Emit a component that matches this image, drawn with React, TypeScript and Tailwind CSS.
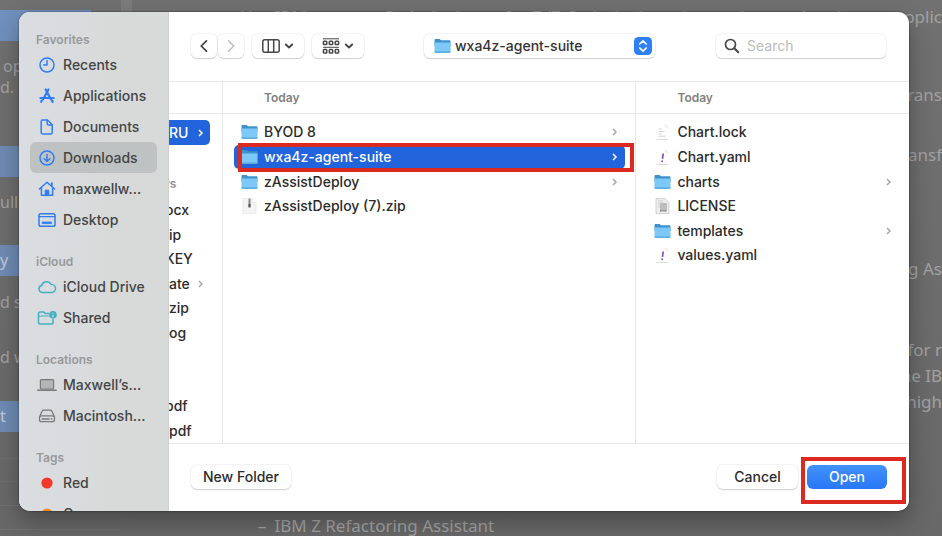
import type { ReactNode } from "react";

function Icon({ children, className = "text-[#2f7cf6]" }: { children: ReactNode; className?: string }) {
  return (
    <svg
      viewBox="0 0 20 18"
      className={"h-[18px] w-5 shrink-0 " + className}
      fill="none"
      stroke="currentColor"
      strokeWidth="1.5"
      strokeLinecap="round"
      strokeLinejoin="round"
      aria-hidden="true"
    >
      {children}
    </svg>
  );
}

const clock = (
  <Icon>
    <circle cx="10" cy="9" r="7" />
    <path d="M10 4.6V9H6.6" />
  </Icon>
);
const appStore = (
  <Icon>
    <path d="M11.400 2.400 6.200 12.200" strokeWidth="2.200" />
    <path d="M8.600 2.400 13.800 12.200" strokeWidth="2.200" />
    <path d="M3.400 11h13.200" strokeWidth="2.200" />
    <path d="M4.800 13.600 4.200 14.800M14.800 13.400l.9 1.500" strokeWidth="2.200" />
  </Icon>
);
const page = (
  <Icon>
    <path d="M5.6 2h4.8l4.8 4.8V14.600a1.400 1.400 0 0 1-1.400 1.400H5.600a1.400 1.400 0 0 1-1.400-1.400V3.400A1.400 1.400 0 0 1 5.600 2Z" />
    <path d="M10.200 2.200v3.600a1.200 1.200 0 0 0 1.200 1.200h3.600" />
  </Icon>
);
const download = (
  <Icon>
    <circle cx="10" cy="9" r="7" />
    <path d="M10 5.400v7M7.200 9.800 10 12.500l2.800-2.700" />
  </Icon>
);
const house = (
  <Icon>
    <path d="M2.400 9 10 2.200 17.600 9" />
    <path d="M14.800 6V3.200" strokeWidth="1.800" />
    <path d="M4.400 8v7.200h11.200V8" />
    <path d="M8.200 15.200v-5h3.600v5Z" fill="currentColor" strokeWidth="1" />
  </Icon>
);
const desktop = (
  <Icon>
    <rect x="2" y="2.700" width="16" height="12.600" rx="1.800" />
    <path d="M2 5.700h16" strokeWidth="1.200" />
    <rect x="5.500" y="11" width="9" height="1.600" fill="currentColor" strokeWidth="0.800" />
  </Icon>
);
const cloud = (
  <Icon className="text-[#45aec2]">
    <path d="M5.200 14.500a3.500 3.500 0 0 1-.500-6.900A5 5 0 0 1 14 6.400a4.100 4.100 0 0 1 1.200 8.100Z" />
  </Icon>
);
const shared = (
  <Icon className="text-[#45aec2]">
    <path d="M11.800 4.600H8.200L6.800 3H3a1.500 1.500 0 0 0-1.500 1.500v9A1.500 1.500 0 0 0 3 15h11.500a1.500 1.500 0 0 0 1.500-1.500V10" />
    <path d="M1.600 7h10.200" strokeWidth="1.200" />
    <circle cx="16" cy="5.800" r="3.800" fill="currentColor" stroke="none" />
    <path d="M16 4v.2M16 6v1.800" stroke="#d8dbdb" strokeWidth="1.200" />
  </Icon>
);
const laptop = (
  <Icon className="text-[#77797a]">
    <rect x="3.400" y="3.600" width="13.200" height="9.400" rx="1" fill="#b4b6b6" strokeWidth="1.200" />
    <path d="M.8 14.200h18.400" strokeWidth="1.600" />
  </Icon>
);
const drive = (
  <Icon className="text-[#77797a]">
    <path
      d="M6.800 3.200h6.400c.8 0 1.400.4 1.700 1.100l2.300 5c.2.400.3.800.3 1.200v2a2.200 2.200 0 0 1-2.200 2.200H4.700a2.200 2.200 0 0 1-2.200-2.200v-2c0-.4.1-.8.300-1.200l2.300-5c.3-.7.9-1.100 1.700-1.100Z"
      strokeWidth="1.300"
    />
    <path d="M2.900 9.600c.5-.5 1.100-.7 1.800-.7h10.600c.7 0 1.300.2 1.800.7M5 12h7.200M14.400 12h.6" strokeWidth="1.300" />
  </Icon>
);
const redDot = (
  <Icon className="text-[#f2382b]">
    <circle cx="10" cy="9" r="5.600" fill="currentColor" stroke="none" />
  </Icon>
);
const orangeDot = (
  <Icon className="text-[#ee8a20]">
    <circle cx="10" cy="9" r="5.600" fill="currentColor" stroke="none" />
  </Icon>
);

const sections = [
  {
    title: "Favorites",
    items: [
      { name: "Recents", icon: clock },
      { name: "Applications", icon: appStore },
      { name: "Documents", icon: page },
      { name: "Downloads", icon: download, selected: true },
      { name: "maxwellw...", icon: house },
      { name: "Desktop", icon: desktop },
    ],
  },
  {
    title: "iCloud",
    items: [
      { name: "iCloud Drive", icon: cloud },
      { name: "Shared", icon: shared },
    ],
  },
  {
    title: "Locations",
    items: [
      { name: "Maxwell’s...", icon: laptop },
      { name: "Macintosh...", icon: drive },
    ],
  },
  {
    title: "Tags",
    items: [
      { name: "Red", icon: redDot },
      { name: "Orange", icon: orangeDot },
    ],
  },
] as { title: string; items: { name: string; icon: ReactNode; selected?: boolean }[] }[];

function Sidebar() {
  return (
    <nav className="flex w-[150px] shrink-0 flex-col gap-[18px] overflow-hidden border-r border-[#cfd0d0] bg-linear-to-r from-[#dadde1] to-[#d8dada] to-60% px-[11px] pt-[19px]">
      {sections.map((s) => (
        <section key={s.title}>
          <h2 className="pl-[6px] text-xs leading-[18px] font-semibold text-[#97999a]">{s.title}</h2>
          <ul>
            {s.items.map((item) => (
              <li key={item.name}>
                <button
                  className={
                    "flex h-[31px] w-full items-center gap-[6px] rounded-[6px] pl-[7px] text-sm font-medium whitespace-nowrap text-[#434545] " +
                    (item.selected ? "bg-[#bfc2c2]" : "")
                  }
                >
                  {item.icon}
                  {item.name}
                </button>
              </li>
            ))}
          </ul>
        </section>
      ))}
    </nav>
  );
}

function FolderIcon() {
  return (
    <svg viewBox="0 0 17 16" className="h-4 w-[17px] shrink-0" aria-hidden="true">
      <path d="M.5 2.200C.5 1.400 1 1 1.700 1h3.900l1.400 1.300h8.300c.7 0 1.200.4 1.200 1.100V8H.5Z" fill="#3f93cc" />
      <path d="M.5 4.400h16v9.400c0 .7-.5 1.200-1.200 1.200H1.700c-.7 0-1.200-.5-1.200-1.200Z" fill="#7cc8f6" />
      <path d="M.5 13.200h16v.6c0 .7-.5 1.200-1.200 1.200H1.700c-.7 0-1.200-.5-1.200-1.200Z" fill="#5fb0e2" />
    </svg>
  );
}

function FileIcon({ kind }: { kind: string }) {
  if (kind === "folder") return <FolderIcon />;
  return (
    <svg viewBox="0 0 17 16" className="h-4 w-[17px] shrink-0" aria-hidden="true">
      {kind === "zip" && (
        <>
          <path d="M2 .5h9l4 4V15.500H2Z" fill="#f4f4f4" stroke="#e6e6e6" strokeWidth="0.600" />
          <path d="M11 .5v4h4" fill="#fff" stroke="#e0e0e0" strokeWidth="0.600" />
          <path d="M8.500.5v8" stroke="#8a8a8a" strokeWidth="2" />
          <path d="M7.500 6h2v3.500h-2Z" fill="#555" />
        </>
      )}
      {kind === "lock" && (
        <>
          <path d="M10.500.8 14 4.300M2.500 15.500h11.500" stroke="#dcdcdc" fill="none" />
          <path d="M4.500 5h3M4.500 7.500h6M4.500 10h3M4.500 12.200h7" stroke="#d2d2d2" />
        </>
      )}
      {kind === "yaml" && (
        <>
          <path d="M10.500.8 14 4.300M2.500 15.500h11.500" stroke="#dcdcdc" fill="none" />
          <path d="M9.200 4.500 8.500 9.800" stroke="#8650b8" strokeWidth="1.700" />
          <circle cx="8.200" cy="12.300" r="1" fill="#8650b8" />
        </>
      )}
      {kind === "license" && (
        <>
          <path d="M2 .5h9l4 4V15.500H2Z" fill="#ededed" stroke="#c8c8c8" strokeWidth="0.800" />
          <path d="M4 3h5M4 5h6M4 7h8M4 9h8" stroke="#cccccc" strokeWidth="0.900" />
          <path d="M6 5h7v8.500H6Z" fill="#bdbdbd" />
          <path d="M6 12.800h1.500M8.500 12.800h1M10.500 12.800h1.500" stroke="#666" />
        </>
      )}
    </svg>
  );
}

function Chevron({ className }: { className: string }) {
  return (
    <svg viewBox="0 0 8 10" className={"h-[10px] w-2 shrink-0 " + className} fill="none" stroke="currentColor" strokeWidth="1.500" aria-hidden="true">
      <path d="M2 2 5 5 2 8" />
    </svg>
  );
}

type Entry = { name: string; kind: string; selected?: boolean };

const suiteParent: Entry[] = [
  { name: "BYOD 8", kind: "folder" },
  { name: "wxa4z-agent-suite", kind: "folder", selected: true },
  { name: "zAssistDeploy", kind: "folder" },
  { name: "zAssistDeploy (7).zip", kind: "zip" },
];

const suiteFiles: Entry[] = [
  { name: "Chart.lock", kind: "lock" },
  { name: "Chart.yaml", kind: "yaml" },
  { name: "charts", kind: "folder" },
  { name: "LICENSE", kind: "license" },
  { name: "templates", kind: "folder" },
  { name: "values.yaml", kind: "yaml" },
];

const scrolledFiles = [
  { name: "ocx", cut: true },
  { name: "ip" },
  { name: "KEY", cut: true },
  { name: "ate", folder: true },
  { name: "zip" },
  { name: "og" },
  { name: "" },
  { name: "" },
  { name: "pdf", cut: true },
  { name: "pdf" },
] as { name: string; cut?: boolean; folder?: boolean }[];

function ColumnHeader({ children }: { children?: ReactNode }) {
  return (
    <h3 className="h-8 shrink-0 border-b border-[#e8e8e8] pl-[41px] text-xs leading-8 font-semibold text-[#808080]">
      {children}
    </h3>
  );
}

function FileList({ entries }: { entries: Entry[] }) {
  return (
    <ul className="grid min-h-0 flex-1 grid-rows-[repeat(13,minmax(0,1fr))] pt-[6px] pr-[10px] pb-[3px] pl-[11px]">
      {entries.map((e) => (
        <li key={e.name} className={"relative rounded-[5px] " + (e.selected ? "bg-[#2264dc] text-white" : "text-[#2b2b2b]")}>
          <button className="flex h-full w-full items-center gap-[6px] pr-[6px] pl-[7px] text-sm font-medium">
            <FileIcon kind={e.kind} />
            <span className="flex-1 truncate text-left">{e.name}</span>
            {e.kind === "folder" && <Chevron className={e.selected ? "text-white" : "text-[#a8a8a8]"} />}
          </button>
          {e.selected && <span className="absolute -top-0.5 -right-[9px] -bottom-[3px] left-1 border-4 border-[#dc2a20]" />}
        </li>
      ))}
    </ul>
  );
}

const control = "flex h-6 items-center rounded-[6px] bg-white shadow-[0_0_1px_1px_#0000000d,0_1px_1px_#00000026]";

function Toolbar() {
  return (
    <header className="flex h-[70px] shrink-0 items-center border-b border-[#e8e8e8] pr-[23px] pb-px pl-[22px]">
      <div className="flex gap-px">
        <button aria-label="Back" className={control + " w-[26px] justify-center text-[#3c3c3c]"}>
          <svg viewBox="0 0 12 16" className="h-4 w-3" fill="none" stroke="currentColor" strokeWidth="1.700" strokeLinecap="round" strokeLinejoin="round">
            <path d="M8.500 2.800 3.200 8l5.300 5.200" />
          </svg>
        </button>
        <button aria-label="Forward" className={control + " w-[26px] justify-center text-[#bdbdbd]"}>
          <svg viewBox="0 0 12 16" className="h-4 w-3" fill="none" stroke="currentColor" strokeWidth="1.500" strokeLinecap="round" strokeLinejoin="round">
            <path d="M3.500 2.800 8.800 8l-5.300 5.200" />
          </svg>
        </button>
      </div>
      <button aria-label="Column view" className={control + " ml-2 w-[52px] justify-between px-[10px] text-[#474747]"}>
        <svg viewBox="0 0 18 14" className="h-[14px] w-[18px] shrink-0" fill="none" stroke="currentColor" strokeWidth="1.500">
          <rect x=".8" y=".8" width="16.400" height="12.400" rx="2" />
          <path d="M6.300 1v12M11.700 1v12" />
        </svg>
        <DownArrow />
      </button>
      <button aria-label="Group items" className={control + " ml-2 w-[52px] justify-between px-[10px] text-[#474747]"}>
        <svg viewBox="0 0 18 16" className="h-4 w-[18px] shrink-0" fill="none" stroke="currentColor" strokeWidth="1.500">
          <path d="M1 .8h16M1 9.300h16" strokeWidth="1" />
          <rect x="1.400" y="3.200" width="3.400" height="3.400" rx=".8" />
          <rect x="7.300" y="3.200" width="3.400" height="3.400" rx=".8" />
          <rect x="13.200" y="3.200" width="3.400" height="3.400" rx=".8" />
          <rect x="1.400" y="11.600" width="3.400" height="3.400" rx=".8" />
          <rect x="7.300" y="11.600" width="3.400" height="3.400" rx=".8" />
          <rect x="13.200" y="11.600" width="3.400" height="3.400" rx=".8" />
        </svg>
        <DownArrow />
      </button>
      <label className={control + " ml-[60px] w-[231px] gap-1 pr-[3px] pl-[10px]"}>
        <FolderIcon />
        <select aria-label="Current folder" className="min-w-0 flex-1 appearance-none text-sm font-medium text-[#333] outline-none">
          <option>wxa4z-agent-suite</option>
        </select>
        <svg viewBox="0 0 18 18" className="pointer-events-none h-[18px] w-[18px] shrink-0" fill="none" stroke="#fff" strokeWidth="1.700" strokeLinecap="round" strokeLinejoin="round" aria-hidden="true">
          <rect width="18" height="18" rx="4.500" fill="#2f7ff7" stroke="none" />
          <path d="M5.800 7 9 3.800 12.200 7M5.800 11 9 14.200l3.200-3.200" />
        </svg>
      </label>
      <label className={control + " ml-auto w-[170px] gap-[7px] px-2"}>
        <svg viewBox="0 0 16 16" className="h-4 w-4 shrink-0 text-[#474747]" fill="none" stroke="currentColor" strokeWidth="1.700" strokeLinecap="round" aria-hidden="true">
          <circle cx="6.500" cy="6.500" r="5" />
          <path d="m10.300 10.300 4 4" strokeWidth="2" />
        </svg>
        <input aria-label="Search" placeholder="Search" className="min-w-0 flex-1 text-sm outline-none placeholder:text-[#bcbcbc]" />
      </label>
    </header>
  );
}

function DownArrow() {
  return (
    <svg viewBox="0 0 10 8" className="h-2 w-[10px] shrink-0" fill="none" stroke="currentColor" strokeWidth="1.900" strokeLinecap="round" strokeLinejoin="round" aria-hidden="true">
      <path d="m1.800 2.500 3.200 3 3.200-3" />
    </svg>
  );
}

function Browser() {
  return (
    <div className="flex min-h-0 flex-1">
      <div className="flex w-[54px] shrink-0 flex-col overflow-hidden border-r border-[#e8e8e8] text-sm font-medium text-[#2b2b2b]">
        <ColumnHeader />
        <button className="mt-[6px] mr-3 flex h-[25px] shrink-0 items-center justify-between rounded-r-[5px] bg-[#2264dc] pr-[5px] text-white">
          RU
          <Chevron className="text-white" />
        </button>
        <h4 className="mt-[30px] -ml-1 text-xs leading-[18px] font-semibold text-[#909090]">rs</h4>
        <ul className="mt-[5px] grid min-h-0 flex-1 grid-rows-[repeat(10,minmax(0,1fr))]">
          {scrolledFiles.map((f, i) => (
            <li key={i} className={"flex items-center justify-between pr-[17px] " + (f.cut ? "-ml-1" : "")}>
              {f.name}
              {f.folder && <Chevron className="text-[#a8a8a8]" />}
            </li>
          ))}
        </ul>
      </div>
      <div className="flex min-w-0 flex-[413] flex-col border-r border-[#e8e8e8]">
        <ColumnHeader>Today</ColumnHeader>
        <FileList entries={suiteParent} />
      </div>
      <div className="flex min-w-0 flex-[273] flex-col">
        <ColumnHeader>Today</ColumnHeader>
        <FileList entries={suiteFiles} />
      </div>
    </div>
  );
}

function Backdrop() {
  return (
    <div aria-hidden="true" className="absolute inset-0 flex overflow-hidden font-['Noto_Sans',sans-serif] text-[#a2a2a2]">
      <div className="w-[121px] shrink-0 text-base leading-[21px] whitespace-nowrap">
        <div className="mt-[10px] mr-[30px] h-[31px] bg-[#7090bd]" />
        <p className="mt-[15px] pl-[3px]">op</p>
        <p>d.</p>
        <div className="mt-12 mr-[30px] h-[31px] bg-[#6f8cb5]" />
        <p className="mt-[15px]">ull r</p>
        <div className="mt-8 mr-[30px] h-[31px] bg-[#6f8cb5] leading-[31px] text-[#c3cad4]">y</div>
        <p className="mt-4">d sc</p>
        <p className="mt-[34px]">d w</p>
        <div className="mt-[33px] mr-[30px] h-[31px] bg-[#6f8cb5] leading-[31px] text-[#c3cad4]">t</div>
        <div className="mt-[26px] h-6 border-y border-[#707070]" />
        <div className="h-6 border-b border-[#707070]" />
        <div className="h-6 border-b border-[#707070]" />
      </div>
      <div className="w-[11px] shrink-0 bg-linear-to-b from-[#7c7c7c] to-transparent" />
      <div className="min-w-0 flex-1 text-right text-[17px] leading-[26px] whitespace-nowrap">
        <div className="mt-1 flex justify-between pl-[108px]">
          <span>Use IBM watsonx Code Assistant for Z (Z Code Assistant) to understand and</span>
          <span>pplic</span>
        </div>
        <p className="mt-[52px]">rans</p>
        <p className="mt-[34px]">ansf</p>
        <p className="mt-[88px]">ng As</p>
        <p className="mt-[55px]">for r</p>
        <p>he IB</p>
        <p>high</p>
        <p className="mt-[98px] flex gap-2 pl-[126px]">
          <span>–</span>
          <span>IBM Z Refactoring Assistant</span>
        </p>
      </div>
    </div>
  );
}

export default function App() {
  return (
    <div className="relative flex h-screen overflow-hidden bg-linear-to-b from-[#717171] to-[#686868] pt-3 pr-[33px] pb-[25px] pl-[19px] font-[Inter,sans-serif]">
      <Backdrop />
      <main
        role="dialog"
        aria-label="Open file"
        className="relative flex min-w-0 flex-1 rounded-[11px] bg-white shadow-[0_0_1px_1px_#00000030,0_10px_24px_#00000050]"
      >
        <div className="flex min-w-0 flex-1 overflow-hidden rounded-[11px]">
          <Sidebar />
          <div className="flex min-w-0 flex-1 flex-col">
            <Toolbar />
            <Browser />
            <footer className="flex h-[68px] shrink-0 items-center justify-between border-t border-[#e8e8e8] px-[22px] pb-[2px] text-sm font-medium text-[#2b2b2b]">
              <button className={control + " w-[100px] justify-center"}>New Folder</button>
              <div className="flex gap-[9px]">
                <button className={control + " w-[81px] justify-center"}>Cancel</button>
                <div className="relative">
                  <button className="h-6 w-[80px] rounded-[6px] bg-linear-to-b from-[#4391fa] to-[#2877f5] text-white">Open</button>
                  <span className="pointer-events-none absolute -top-2 -right-[19px] -bottom-[15px] -left-[6px] border-4 border-[#dc2a20]" />
                </div>
              </div>
            </footer>
          </div>
        </div>
      </main>
    </div>
  );
}
